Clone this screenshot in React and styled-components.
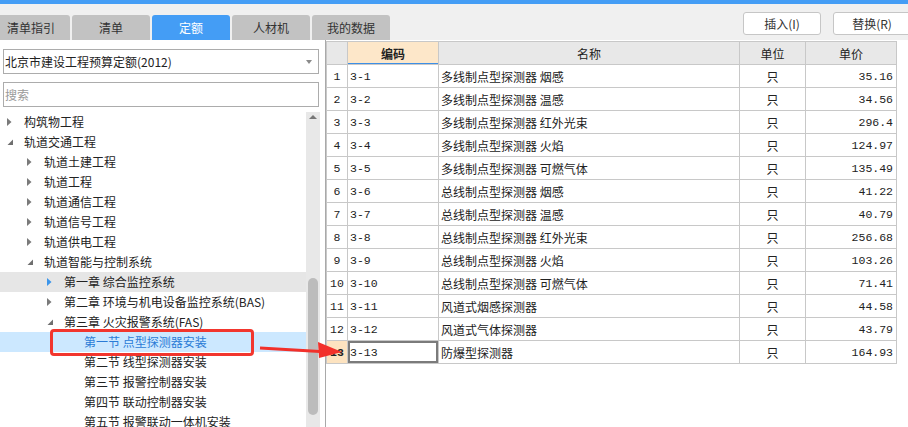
import React from 'react';
import styled, { createGlobalStyle, css } from 'styled-components';

const Global = createGlobalStyle`
  html, body { margin: 0; padding: 0; background: #f0f0f0; }
  body { font-family: "Noto Sans CJK SC", "Noto Sans", sans-serif; }
  * { box-sizing: border-box; }
`;

const Root = styled.div`
  width: 908px;
  height: 427px;
  position: relative;
  overflow: hidden;
  background: #f0f0f0;
  display: flex;
  flex-direction: column;
  font-size: 12px;
  color: #222;
`;

const TopBar = styled.div`
  height: 4px;
  background: #449df5;
  flex: none;
`;

const Header = styled.div`
  height: 36px;
  flex: none;
  display: flex;
  align-items: flex-start;
`;

const Tabs = styled.div`
  display: flex;
  gap: 2px;
  margin-left: -8px;
  margin-top: 11px;
`;

const Tab = styled.div`
  width: 78px;
  height: 25px;
  border-radius: 3px 3px 0 0;
  display: flex;
  align-items: center;
  justify-content: center;
  font-size: 12px;
  background: ${p => (p.$active ? '#449df5' : '#c2c2c2')};
  color: ${p => (p.$active ? '#fff' : '#333')};
`;

const ButtonGroup = styled.div`
  margin-left: auto;
  margin-right: -3px;
  margin-top: 8px;
  display: flex;
  gap: 12px;
`;

const ToolButton = styled.div`
  width: 78px;
  height: 23px;
  background: #fff;
  border: 1px solid #c6c6c6;
  border-radius: 3px;
  display: flex;
  align-items: center;
  justify-content: center;
  font-size: 12px;
  color: #333;
`;

const Body = styled.div`
  flex: 1;
  min-height: 0;
  display: flex;
`;

const LeftPanel = styled.div`
  width: 325px;
  flex: none;
  background: #fff;
  display: flex;
  flex-direction: column;
`;

const Field = styled.div`
  height: 25px;
  margin: ${p => (p.$first ? '9px' : '8px')} 6px 0 3px;
  border: 1px solid #acacac;
  display: flex;
  align-items: center;
  justify-content: space-between;
  padding: 0 6px 0 1px;
  color: ${p => (p.$placeholder ? '#9a9a9a' : '#222')};
  font-size: 12px;
  flex: none;
`;

const Caret = styled.span`
  width: 0;
  height: 0;
  border-left: 3px solid transparent;
  border-right: 3px solid transparent;
  border-top: 4px solid #8a8a8a;
`;

const TreeWrap = styled.div`
  margin-top: 5px;
  flex: 1;
  min-height: 0;
  display: flex;
  overflow: hidden;
  padding-right: 5px;
`;

const TreeList = styled.div`
  flex: 1;
  min-width: 0;
`;

const TreeRow = styled.div`
  position: relative;
  height: 20px;
  display: flex;
  align-items: center;
  padding-left: ${p => 4 + p.$level * 20}px;
  white-space: nowrap;
  color: #222;
  ${p => p.$hover && css`background: #e6e6e6;`}
  ${p => p.$selected && css`background: #cce8ff; color: #2a7bd6;`}
`;

const Expander = styled.span`
  width: 20px;
  height: 20px;
  flex: none;
  display: flex;
  align-items: center;
  padding-left: 3px;
`;

const Label = styled.span`
  line-height: 20px;
`;

const Highlight = styled.div`
  position: absolute;
  left: 50px;
  top: -3px;
  width: 204px;
  height: 27px;
  border: 3px solid #f2362e;
  border-radius: 4px;
  pointer-events: none;
`;

const ScrollBar = styled.div`
  width: 14px;
  flex: none;
  background: #e8e8e8;
  display: flex;
  flex-direction: column;
  align-items: center;
`;

const ScrollArrow = styled.span`
  margin-top: 3px;
  width: 0;
  height: 0;
  border-left: 4px solid transparent;
  border-right: 4px solid transparent;
  border-bottom: 4px solid #777;
`;

const Thumb = styled.div`
  margin-top: 159px;
  width: 10px;
  height: 137px;
  border-radius: 5px;
  background: #bcbcbc;
`;

const RightPanel = styled.div`
  flex: 1;
  background: #fff;
  border-left: 1px solid #a9a9a9;
  padding-top: 1px;
`;

const Grid = styled.div`
  display: grid;
  grid-template-columns: 21px 91px 301px 66px 91px;
  width: 571px;
  border-top: 1px solid #c8c8c8;
  border-left: 1px solid #c8c8c8;
`;

const Cell = styled.div`
  height: 23px;
  border-right: 1px solid #c8c8c8;
  border-bottom: 1px solid #c8c8c8;
  display: flex;
  align-items: center;
  white-space: nowrap;
  overflow: hidden;
  font-size: 12px;
  color: #222;
  justify-content: ${p => (p.$align === 'right' ? 'flex-end' : p.$align === 'center' ? 'center' : 'flex-start')};
  padding: ${p => (p.$align === 'right' ? '0 3px 0 0' : p.$align === 'center' ? '0' : '0 0 0 2px')};
  ${p => p.$mono && css`font-family: "Liberation Mono", "DejaVu Sans Mono", monospace; font-size: 11.5px;`}
`;

const HeadCell = styled(Cell)`
  background: ${p => (p.$active ? '#fde7c9' : '#e8e8e8')};
  font-weight: ${p => (p.$active ? 700 : 400)};
  justify-content: center;
  padding: 0;
  ${p => p.$active && css`box-shadow: inset 0 -1px 0 #3d8fe6;`}
`;

const NumCell = styled(Cell)`
  justify-content: center;
  padding: 0;
  font-family: "Liberation Mono", "DejaVu Sans Mono", monospace;
  font-size: 11.5px;
  ${p => p.$current && css`background: #fde3c0; font-weight: 700;`}
`;

const EditCell = styled(Cell)`
  box-shadow: inset 0 0 0 2px #7b7b7b, inset 2px 0 0 #3d8fe6;
`;

const ArrowOverlay = styled.svg`
  position: absolute;
  left: 256px;
  top: 338px;
  pointer-events: none;
`;

const RightTri = ({ color }) => (
  <svg width="5" height="8" viewBox="0 0 5 8">
    <polygon points="0,0 4.5,4 0,8" fill={color} />
  </svg>
);

const DownTri = () => (
  <svg width="7" height="7" viewBox="0 0 7 7">
    <polygon points="6,0.5 6,6 0.5,6" fill="#6f6f6f" />
  </svg>
);

const tree = [
  { level: 0, label: '构筑物工程', exp: 'c' },
  { level: 0, label: '轨道交通工程', exp: 'e' },
  { level: 1, label: '轨道土建工程', exp: 'c' },
  { level: 1, label: '轨道工程', exp: 'c' },
  { level: 1, label: '轨道通信工程', exp: 'c' },
  { level: 1, label: '轨道信号工程', exp: 'c' },
  { level: 1, label: '轨道供电工程', exp: 'c' },
  { level: 1, label: '轨道智能与控制系统', exp: 'e' },
  { level: 2, label: '第一章 综合监控系统', exp: 'c', hover: true },
  { level: 2, label: '第二章 环境与机电设备监控系统(BAS)', exp: 'c' },
  { level: 2, label: '第三章 火灾报警系统(FAS)', exp: 'e' },
  { level: 3, label: '第一节 点型探测器安装', selected: true },
  { level: 3, label: '第二节 线型探测器安装' },
  { level: 3, label: '第三节 报警控制器安装' },
  { level: 3, label: '第四节 联动控制器安装' },
  { level: 3, label: '第五节 报警联动一体机安装' },
];

const rows = [
  ['3-1', '多线制点型探测器 烟感', '35.16'],
  ['3-2', '多线制点型探测器 温感', '34.56'],
  ['3-3', '多线制点型探测器 红外光束', '296.4'],
  ['3-4', '多线制点型探测器 火焰', '124.97'],
  ['3-5', '多线制点型探测器 可燃气体', '135.49'],
  ['3-6', '总线制点型探测器 烟感', '41.22'],
  ['3-7', '总线制点型探测器 温感', '40.79'],
  ['3-8', '总线制点型探测器 红外光束', '256.68'],
  ['3-9', '总线制点型探测器 火焰', '103.26'],
  ['3-10', '总线制点型探测器 可燃气体', '71.41'],
  ['3-11', '风道式烟感探测器', '44.58'],
  ['3-12', '风道式气体探测器', '43.79'],
  ['3-13', '防爆型探测器', '164.93'],
];

const tabs = ['清单指引', '清单', '定额', '人材机', '我的数据'];

export default function App() {
  return (
    <Root>
      <Global />
      <TopBar />
      <Header>
        <Tabs>
          {tabs.map(t => (
            <Tab key={t} $active={t === '定额'}>{t}</Tab>
          ))}
        </Tabs>
        <ButtonGroup>
          <ToolButton>插入(I)</ToolButton>
          <ToolButton>替换(R)</ToolButton>
        </ButtonGroup>
      </Header>
      <Body>
        <LeftPanel>
          <Field $first>
            <span>北京市建设工程预算定额(2012)</span>
            <Caret />
          </Field>
          <Field $placeholder>搜索</Field>
          <TreeWrap>
            <TreeList>
              {tree.map((n, i) => (
                <TreeRow key={i} $level={n.level} $hover={n.hover} $selected={n.selected}>
                  {n.exp && (
                    <Expander>
                      {n.exp === 'c' ? <RightTri color={n.hover ? '#3b95ea' : '#7a7a7a'} /> : <DownTri />}
                    </Expander>
                  )}
                  {!n.exp && <Expander />}
                  <Label>{n.label}</Label>
                  {n.selected && <Highlight />}
                </TreeRow>
              ))}
            </TreeList>
            <ScrollBar>
              <ScrollArrow />
              <Thumb />
            </ScrollBar>
          </TreeWrap>
        </LeftPanel>
        <RightPanel>
          <Grid>
            <HeadCell />
            <HeadCell $active>编码</HeadCell>
            <HeadCell>名称</HeadCell>
            <HeadCell>单位</HeadCell>
            <HeadCell>单价</HeadCell>
            {rows.map((r, i) => {
              const current = i === rows.length - 1;
              const CodeCell = current ? EditCell : Cell;
              return (
                <React.Fragment key={r[0]}>
                  <NumCell $current={current}>{i + 1}</NumCell>
                  <CodeCell $mono>{r[0]}</CodeCell>
                  <Cell>{r[1]}</Cell>
                  <Cell $align="center">只</Cell>
                  <Cell $align="right" $mono>{r[2]}</Cell>
                </React.Fragment>
              );
            })}
          </Grid>
        </RightPanel>
      </Body>
      <ArrowOverlay width="92" height="24" viewBox="0 0 92 24">
        <line x1="4" y1="10" x2="64" y2="13.5" stroke="#f2302a" strokeWidth="3" />
        <polygon points="62,4 86,14 63,20" fill="#f2302a" />
      </ArrowOverlay>
    </Root>
  );
}
